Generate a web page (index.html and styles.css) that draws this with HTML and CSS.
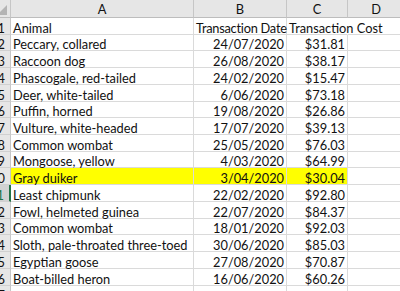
FILE: index.html
```html
<!DOCTYPE html>
<html lang="en">
<head>
  <meta charset="UTF-8" />
  <title>Transactions</title>
  <link rel="stylesheet" href="styles.css">
</head>
<body>

  <div class="sheet">
    <div class="corner"><span class="tri"></span></div>
    <div class="colhdr">A</div>
    <div class="colhdr">B</div>
    <div class="colhdr">C</div>
    <div class="colhdr">D</div>
    <div class="colhdr"></div>

    <div class="rowhdr">1</div>
    <div class="cell">Animal</div>
    <div class="cell tight">Transaction Date</div>
    <div class="cell over">Transaction Cost</div>
    <div class="cell"></div>
    <div class="cell"></div>

    <div class="rowhdr">2</div>
    <div class="cell">Peccary, collared</div>
    <div class="cell num">24/07/2020</div>
    <div class="cell num">$31.81</div>
    <div class="cell"></div>
    <div class="cell"></div>

    <div class="rowhdr">3</div>
    <div class="cell">Raccoon dog</div>
    <div class="cell num">26/08/2020</div>
    <div class="cell num">$38.17</div>
    <div class="cell"></div>
    <div class="cell"></div>

    <div class="rowhdr">4</div>
    <div class="cell">Phascogale, red-tailed</div>
    <div class="cell num">24/02/2020</div>
    <div class="cell num">$15.47</div>
    <div class="cell"></div>
    <div class="cell"></div>

    <div class="rowhdr">5</div>
    <div class="cell">Deer, white-tailed</div>
    <div class="cell num">6/06/2020</div>
    <div class="cell num">$73.18</div>
    <div class="cell"></div>
    <div class="cell"></div>

    <div class="rowhdr">6</div>
    <div class="cell">Puffin, horned</div>
    <div class="cell num">19/08/2020</div>
    <div class="cell num">$26.86</div>
    <div class="cell"></div>
    <div class="cell"></div>

    <div class="rowhdr">7</div>
    <div class="cell">Vulture, white-headed</div>
    <div class="cell num">17/07/2020</div>
    <div class="cell num">$39.13</div>
    <div class="cell"></div>
    <div class="cell"></div>

    <div class="rowhdr">8</div>
    <div class="cell">Common wombat</div>
    <div class="cell num">25/05/2020</div>
    <div class="cell num">$76.03</div>
    <div class="cell"></div>
    <div class="cell"></div>

    <div class="rowhdr">9</div>
    <div class="cell">Mongoose, yellow</div>
    <div class="cell num">4/03/2020</div>
    <div class="cell num">$64.99</div>
    <div class="cell"></div>
    <div class="cell"></div>

    <div class="rowhdr">10</div>
    <div class="cell hl">Gray duiker</div>
    <div class="cell num hl">3/04/2020</div>
    <div class="cell num hl">$30.04</div>
    <div class="cell"></div>
    <div class="cell"></div>

    <div class="rowhdr active">11</div>
    <div class="cell">Least chipmunk</div>
    <div class="cell num">22/02/2020</div>
    <div class="cell num">$92.80</div>
    <div class="cell"></div>
    <div class="cell"></div>

    <div class="rowhdr">12</div>
    <div class="cell">Fowl, helmeted guinea</div>
    <div class="cell num">22/07/2020</div>
    <div class="cell num">$84.37</div>
    <div class="cell"></div>
    <div class="cell"></div>

    <div class="rowhdr">13</div>
    <div class="cell">Common wombat</div>
    <div class="cell num">18/01/2020</div>
    <div class="cell num">$92.03</div>
    <div class="cell"></div>
    <div class="cell"></div>

    <div class="rowhdr">14</div>
    <div class="cell">Sloth, pale-throated three-toed</div>
    <div class="cell num">30/06/2020</div>
    <div class="cell num">$85.03</div>
    <div class="cell"></div>
    <div class="cell"></div>

    <div class="rowhdr">15</div>
    <div class="cell">Egyptian goose</div>
    <div class="cell num">27/08/2020</div>
    <div class="cell num">$70.87</div>
    <div class="cell"></div>
    <div class="cell"></div>

    <div class="rowhdr">16</div>
    <div class="cell">Boat-billed heron</div>
    <div class="cell num">16/06/2020</div>
    <div class="cell num">$60.26</div>
    <div class="cell"></div>
    <div class="cell"></div>

    <div class="rowhdr">17</div>
    <div class="cell"></div>
    <div class="cell"></div>
    <div class="cell"></div>
    <div class="cell"></div>
    <div class="cell"></div>
  </div>

</body>
</html>
```

FILE: styles.css
```css
:root {
  --hdr-bg: #e6e6e6;
  --hdr-line: #c6c6c6;
  --grid: #dadada;
  --text: #111;
  --green: #217346;
}

* {
  box-sizing: border-box;
}

body {
  margin: 0;
  overflow: hidden;
  background: #fff;
  font-family: Lato, 'Open Sans', sans-serif;
  font-size: 12.8px;
  color: var(--text);
}

.sheet {
  display: grid;
  grid-template-columns: 30px 183px 93px 61px 57px 60px;
  grid-template-rows: 18px;
  grid-auto-rows: 16.73px;
  margin-left: -19px;
  width: 484px;
}

.corner {
  position: relative;
  background: var(--hdr-bg);
  border-right: 1px solid var(--hdr-line);
  border-bottom: 1px solid #bdbdbd;
}

.tri {
  position: absolute;
  right: 3px;
  bottom: 2px;
  width: 0;
  height: 0;
  border-left: 10px solid transparent;
  border-bottom: 10px solid #b4b4b4;
}

.colhdr {
  background: var(--hdr-bg);
  border-right: 1px solid var(--hdr-line);
  border-bottom: 1px solid #bdbdbd;
  display: flex;
  align-items: flex-end;
  justify-content: center;
  padding-bottom: 1px;
  line-height: 14px;
}

.rowhdr {
  background: var(--hdr-bg);
  border-right: 1px solid var(--hdr-line);
  border-bottom: 1px solid #d0d0d0;
  display: flex;
  align-items: flex-end;
  justify-content: flex-end;
  padding-right: 5px;
  line-height: 12px;
}

.rowhdr.active {
  background: #d2d2d2;
  color: var(--green);
  border-right: 2px solid var(--green);
}

.cell {
  border-right: 1px solid var(--grid);
  border-bottom: 1px solid var(--grid);
  display: flex;
  align-items: flex-end;
  padding: 0 2px;
  line-height: 12px;
  white-space: nowrap;
}

.cell.num {
  justify-content: flex-end;
}

.cell.tight {
  letter-spacing: -0.25px;
}

.cell.over {
  overflow: visible;
  border-right-color: transparent;
}

.cell.hl {
  background: #ffff00;
}
```
